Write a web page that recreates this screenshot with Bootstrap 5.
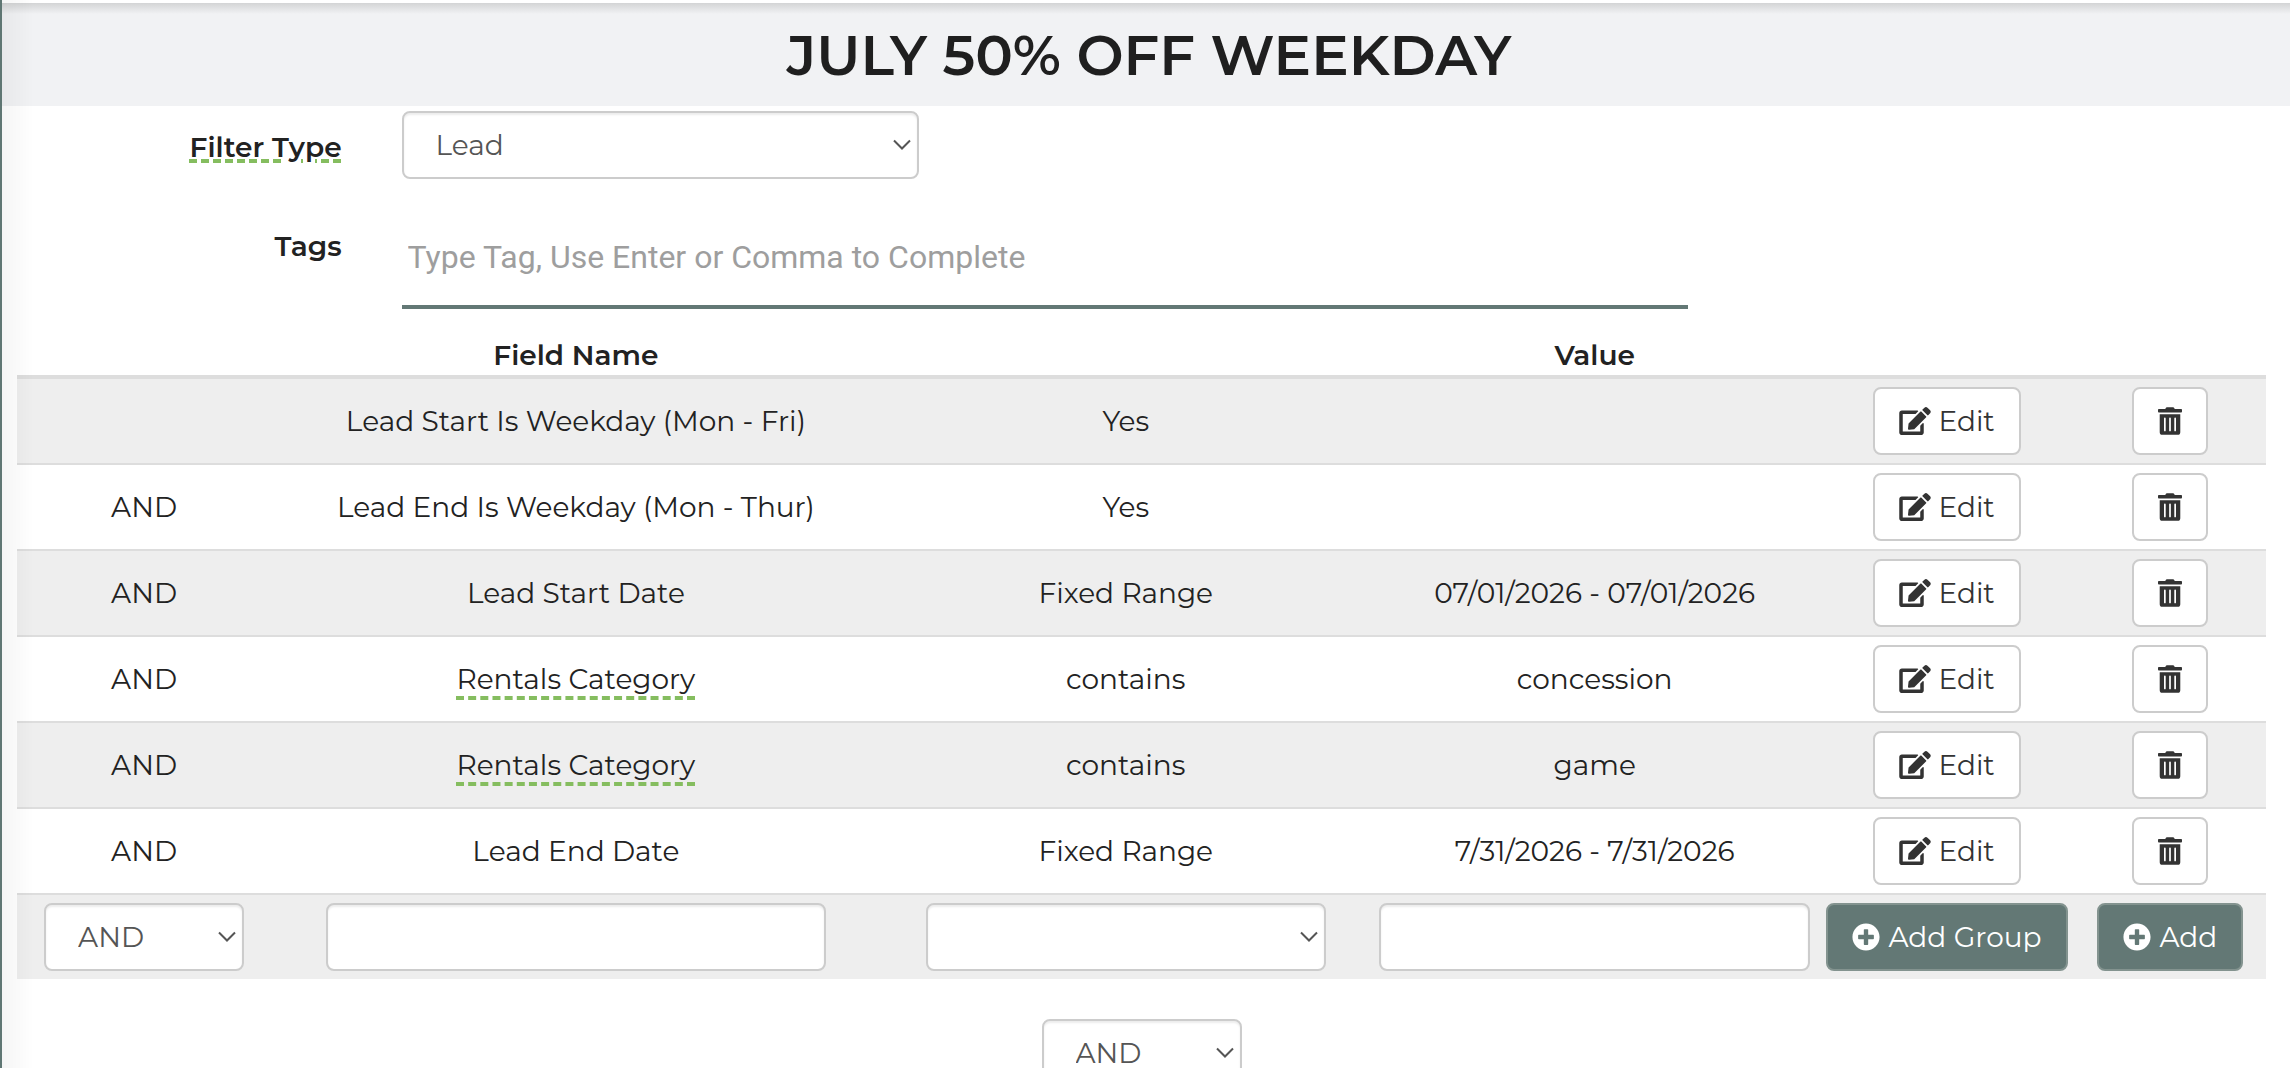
<!DOCTYPE html>
<html lang="en">
<head>
<meta charset="utf-8">
<meta name="viewport" content="width=device-width, initial-scale=1">
<title>July 50% Off Weekday</title>
<link href="https://cdn.jsdelivr.net/npm/bootstrap@5.3.0/dist/css/bootstrap.min.css" rel="stylesheet">
<style>
  body {
    font-family: Montserrat, Inter, "Liberation Sans", sans-serif;
    font-size: 28px;
    line-height: 40px;
    color: #222;
    background: #fff;
    border-left: 2px solid #5f7673;
    min-height: 100vh;
    overflow: hidden;
  }
  body::before {
    content: "";
    position: fixed;
    inset: 0 auto 0 2px;
    width: 32px;
    background: linear-gradient(90deg, rgba(0,0,0,.04), rgba(0,0,0,0));
    pointer-events: none;
    z-index: 5;
  }
  .title-bar {
    margin-top: 3px;
    height: 103px;
    padding-left: 6px;
    background: linear-gradient(#d3d4d5, #f1f2f4 11px);
  }
  .title-bar h1 { font-size: 56px; line-height: 64px; font-weight: 600; color: #1f1f1f; }
  .page-body { padding: 5px 24px 0 15px; }
  .form-label-cell { flex: 0 0 17.1%; padding: 3px 60px 0 0; text-align: right; font-weight: 600; }
  .tags-row { padding-top: 44px; }
  .w-filter { width: 23%; }
  .w-tags { width: 57.2%; }
  .help-term {
    text-decoration: underline dashed #85bd5f 4px;
    text-underline-offset: 7px;
  }
  .form-label-cell .help-term { text-underline-offset: 3px; }
  .form-control, .form-select {
    height: 68px;
    font-size: 28px;
    line-height: 40px;
    color: #555;
    border: 2px solid #ccc;
    border-radius: 8px;
    box-shadow: inset 0 2px 2px rgba(0,0,0,.075);
    padding: 8px 32px;
  }
  .form-select {
    background-image: url("data:image/svg+xml,%3Csvg xmlns='http://www.w3.org/2000/svg' viewBox='0 0 18 12'%3E%3Cpath d='M1 1.5l8 8 8-8' fill='none' stroke='%23555' stroke-width='2'/%3E%3C/svg%3E");
    background-size: 18px 12px;
    background-position: right 6px center;
  }
  .tag-input {
    font-family: Roboto, sans-serif;
    font-size: 32px;
    height: 86px;
    color: #555;
    border: 0;
    border-bottom: 4px solid #637875;
    padding: 0 6px 14px;
    outline: 0;
  }
  .tag-input::placeholder { color: #9e9e9e; opacity: 1; }
  .rules { table-layout: fixed; border-collapse: separate; border-spacing: 0; margin: 26px 0 0; --bs-table-color: #222; --bs-table-bg: transparent; }
  .rules > thead th { padding: 0 8px; font-weight: 600; border: 0; border-bottom: 4px solid #ddd; height: 44px; line-height: 40px; }
  .rules > tbody td { padding: 8px; border: 0; border-top: 2px solid #ddd; }
  .rules > tbody tr:first-child td { border-top: 0; }
  .rules > tbody tr:nth-child(odd) td { background: #eee; }
  .btn {
    font-size: 28px;
    line-height: 40px;
    height: 68px;
    padding: 0 24px;
    border: 2px solid #ccc;
    border-radius: 8px;
    color: #333;
    background: #fff;
    gap: 8px;
  }
  .btn-add { background: #637875; border-color: #83938f; color: #fff; }
  .ico { height: 28px; fill: currentColor; flex: none; }
  .w-join { width: 200px; }
  .w-field { width: 500px; max-width: 100%; }
  .w-op { width: 400px; max-width: 100%; }
  .group-join { padding-top: 40px; }
</style>
</head>
<body>
<svg class="d-none" xmlns="http://www.w3.org/2000/svg">
  <symbol id="i-edit" viewBox="0 0 576 512"><path d="M402.6 83.2l90.2 90.2c3.8 3.8 3.8 10 0 13.8L274.4 405.6l-92.8 10.3c-12.4 1.4-22.9-9.1-21.5-21.5l10.3-92.8L388.8 83.2c3.8-3.8 10-3.8 13.8 0zm162-22.9l-48.8-48.8c-15.2-15.2-39.9-15.2-55.2 0l-35.4 35.4c-3.8 3.8-3.8 10 0 13.8l90.2 90.2c3.8 3.8 10 3.8 13.8 0l35.4-35.4c15.2-15.3 15.2-40 0-55.2zM384 346.2V448H64V128h229.8c3.2 0 6.2-1.3 8.5-3.5l40-40c7.6-7.6 2.2-20.5-8.5-20.5H48C21.5 64 0 85.5 0 112v352c0 26.5 21.5 48 48 48h352c26.5 0 48-21.5 48-48V306.2c0-10.7-12.9-16-20.5-8.5l-40 40c-2.2 2.3-3.5 5.3-3.5 8.5z"/></symbol>
  <symbol id="i-trash" viewBox="0 0 448 512"><path d="M32 464a48 48 0 0 0 48 48h288a48 48 0 0 0 48-48V128H32zm272-256a16 16 0 0 1 32 0v224a16 16 0 0 1-32 0zm-96 0a16 16 0 0 1 32 0v224a16 16 0 0 1-32 0zm-96 0a16 16 0 0 1 32 0v224a16 16 0 0 1-32 0zM432 32H312l-9.4-18.7A24 24 0 0 0 281.1 0H166.8a23.72 23.72 0 0 0-21.4 13.3L136 32H16A16 16 0 0 0 0 48v32a16 16 0 0 0 16 16h416a16 16 0 0 0 16-16V48a16 16 0 0 0-16-16z"/></symbol>
  <symbol id="i-plus" viewBox="0 0 512 512"><path d="M256 8C119 8 8 119 8 256s111 248 248 248 248-111 248-248S393 8 256 8zm144 276c0 6.6-5.4 12-12 12h-92v92c0 6.6-5.4 12-12 12h-56c-6.6 0-12-5.4-12-12v-92h-92c-6.6 0-12-5.4-12-12v-56c0-6.6 5.4-12 12-12h92v-92c0-6.6 5.4-12 12-12h56c6.6 0 12 5.4 12 12v92h92c6.6 0 12 5.4 12 12v56z"/></symbol>
</svg>

<header class="title-bar d-flex align-items-center justify-content-center">
  <h1 class="m-0">JULY 50% OFF WEEKDAY</h1>
</header>

<main class="page-body">
  <div class="d-flex align-items-center">
    <label class="form-label-cell" for="filterType"><span class="help-term">Filter Type</span></label>
    <select class="form-select w-filter" id="filterType"><option>Lead</option></select>
  </div>
  <div class="tags-row d-flex align-items-start">
    <label class="form-label-cell" for="tags">Tags</label>
    <input class="tag-input w-tags" id="tags" type="text" placeholder="Type Tag, Use Enter or Comma to Complete">
  </div>

  <table class="table rules text-center align-middle">
    <colgroup>
      <col style="width:11.3%"><col style="width:27.1%"><col style="width:21.8%"><col style="width:19.9%"><col style="width:11.4%"><col style="width:8.5%">
    </colgroup>
    <thead>
      <tr><th></th><th scope="col">Field Name</th><th></th><th scope="col">Value</th><th></th><th></th></tr>
    </thead>
    <tbody>
      <tr>
        <td></td><td>Lead Start Is Weekday (Mon - Fri)</td><td>Yes</td><td></td>
        <td><button type="button" class="btn d-inline-flex align-items-center"><svg class="ico" width="32"><use href="#i-edit"/></svg>Edit</button></td>
        <td><button type="button" class="btn d-inline-flex align-items-center" aria-label="Delete"><svg class="ico" width="24"><use href="#i-trash"/></svg></button></td>
      </tr>
      <tr>
        <td>AND</td><td>Lead End Is Weekday (Mon - Thur)</td><td>Yes</td><td></td>
        <td><button type="button" class="btn d-inline-flex align-items-center"><svg class="ico" width="32"><use href="#i-edit"/></svg>Edit</button></td>
        <td><button type="button" class="btn d-inline-flex align-items-center" aria-label="Delete"><svg class="ico" width="24"><use href="#i-trash"/></svg></button></td>
      </tr>
      <tr>
        <td>AND</td><td>Lead Start Date</td><td>Fixed Range</td><td>07/01/2026 - 07/01/2026</td>
        <td><button type="button" class="btn d-inline-flex align-items-center"><svg class="ico" width="32"><use href="#i-edit"/></svg>Edit</button></td>
        <td><button type="button" class="btn d-inline-flex align-items-center" aria-label="Delete"><svg class="ico" width="24"><use href="#i-trash"/></svg></button></td>
      </tr>
      <tr>
        <td>AND</td><td><span class="help-term">Rentals Category</span></td><td>contains</td><td>concession</td>
        <td><button type="button" class="btn d-inline-flex align-items-center"><svg class="ico" width="32"><use href="#i-edit"/></svg>Edit</button></td>
        <td><button type="button" class="btn d-inline-flex align-items-center" aria-label="Delete"><svg class="ico" width="24"><use href="#i-trash"/></svg></button></td>
      </tr>
      <tr>
        <td>AND</td><td><span class="help-term">Rentals Category</span></td><td>contains</td><td>game</td>
        <td><button type="button" class="btn d-inline-flex align-items-center"><svg class="ico" width="32"><use href="#i-edit"/></svg>Edit</button></td>
        <td><button type="button" class="btn d-inline-flex align-items-center" aria-label="Delete"><svg class="ico" width="24"><use href="#i-trash"/></svg></button></td>
      </tr>
      <tr>
        <td>AND</td><td>Lead End Date</td><td>Fixed Range</td><td>7/31/2026 - 7/31/2026</td>
        <td><button type="button" class="btn d-inline-flex align-items-center"><svg class="ico" width="32"><use href="#i-edit"/></svg>Edit</button></td>
        <td><button type="button" class="btn d-inline-flex align-items-center" aria-label="Delete"><svg class="ico" width="24"><use href="#i-trash"/></svg></button></td>
      </tr>
      <tr>
        <td><select class="form-select w-join mx-auto" aria-label="Join"><option>AND</option></select></td>
        <td><input class="form-control w-field mx-auto" type="text" aria-label="Field name"></td>
        <td><select class="form-select w-op mx-auto" aria-label="Operator"><option></option></select></td>
        <td><input class="form-control" type="text" aria-label="Value"></td>
        <td><button type="button" class="btn btn-add d-inline-flex align-items-center text-nowrap"><svg class="ico" width="28"><use href="#i-plus"/></svg>Add Group</button></td>
        <td><button type="button" class="btn btn-add d-inline-flex align-items-center"><svg class="ico" width="28"><use href="#i-plus"/></svg>Add</button></td>
      </tr>
    </tbody>
  </table>

  <div class="group-join d-flex justify-content-center">
    <select class="form-select w-join" aria-label="Join groups"><option>AND</option></select>
  </div>
</main>
<script src="https://cdn.jsdelivr.net/npm/bootstrap@5.3.0/dist/js/bootstrap.bundle.min.js"></script>
</body>
</html>
